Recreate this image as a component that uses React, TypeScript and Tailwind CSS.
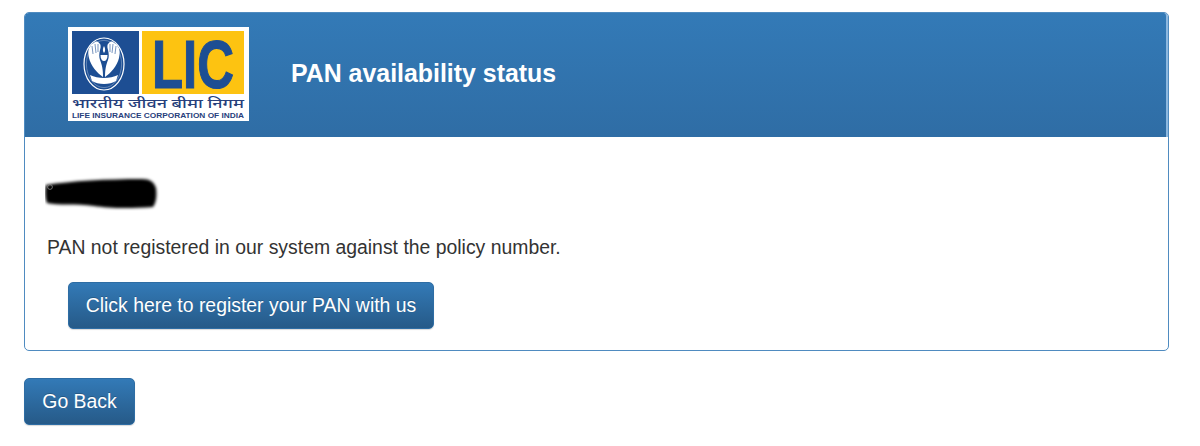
export default function App() {
  const btn =
    "block h-[47px] rounded-[5px] border border-[#2e6da4] bg-gradient-to-b from-[#337ab7] to-[#265a88] text-[19.4px] leading-none text-white [text-shadow:0_-1px_0_rgba(0,0,0,0.2)] shadow-[0_1px_1px_rgba(0,0,0,0.15)]";
  return (
    <div className="min-h-[446px] bg-white pl-[24px] pr-[31px] pt-[12px] font-['Liberation_Sans',Arial,sans-serif] text-[#333333]">
      <section className="h-[339px] rounded-[5px] border border-[#4f8bc0]">
        <header className="flex h-[124px] items-center gap-[42px] rounded-t-[4px] border-r-2 border-r-[#8db8df] bg-gradient-to-b from-[#337ab7] to-[#2f6da5] pb-[2px] pl-[43px]">
          <svg width="181" height="94" viewBox="0 0 181 94" className="shrink-0" role="img" aria-label="LIC logo">
            <rect width="181" height="94" fill="#ffffff" />
            <rect x="4" y="4" width="67" height="63" fill="#1d4e93" />
            <rect x="74" y="4" width="102" height="63" fill="#fdc311" />
            <ellipse cx="36" cy="37" rx="20" ry="26" fill="none" stroke="#ffffff" strokeWidth="1.2" />
            <ellipse cx="36" cy="37" rx="17.6" ry="23.6" fill="none" stroke="#a9bcd8" strokeWidth="0.5" />
            {/* left hand */}
            <path d="M35 50 C29 46 23 39 21 31 C20 26 20 22 22 20 C23 17 25 16 26 16 C27 14 30 14 31 16 C33 17 33 20 32 23 C31 27 31 30 32 33 C34 38 35 42 35 50 Z" fill="#ffffff" />
            {/* right hand */}
            <path d="M37 50 C43 46 49 39 51 31 C52 26 52 22 50 20 C49 17 47 16 46 16 C45 14 42 14 41 16 C39 17 39 20 40 23 C41 27 41 30 40 33 C38 38 37 42 37 50 Z" fill="#ffffff" />
            <path d="M24 19 L25 27 M27 17 L28 26 M30 17 L30 25 M48 19 L47 27 M45 17 L44 26 M42 17 L42 25" stroke="#1d4e93" strokeWidth="0.6" fill="none" />
            {/* lamp */}
            <path d="M32.5 28 L39.5 28 C39.5 32 38 34 36 34 C34 34 32.5 32 32.5 28 Z" fill="#ffffff" />
            <path d="M36 19 C37.5 22 37.5 24 36 26 C34.5 24 34.5 22 36 19 Z" fill="#ffffff" />
            {/* motto band */}
            <path d="M22 48 C30 52 42 52 50 48 L48 54 C42 58 30 58 24 54 Z" fill="#ffffff" />
            <text x="125" y="61" textAnchor="middle" fontFamily="'Liberation Sans', Arial, sans-serif" fontSize="69" fontWeight="700" fill="#1d4e93" stroke="#1d4e93" strokeWidth="1.2" textLength="82" lengthAdjust="spacingAndGlyphs">LIC</text>
            <text x="4" y="81" fontFamily="'Noto Sans Devanagari', 'Noto Serif Devanagari', 'Noto Sans', serif" fontSize="13" fontWeight="500" fill="#27407c" textLength="172" lengthAdjust="spacingAndGlyphs">भारतीय जीवन बीमा निगम</text>
            <text x="4" y="91" fontFamily="'Liberation Sans', Arial, sans-serif" fontSize="7.6" fontWeight="700" fill="#27407c" textLength="172" lengthAdjust="spacingAndGlyphs">LIFE INSURANCE CORPORATION OF INDIA</text>
          </svg>
          <h1 className="mb-[2px] text-[24.9px] font-bold leading-none text-white">PAN availability status</h1>
        </header>
        <div className="pl-[21px] pt-[38px]">
          <svg width="120" height="36" viewBox="0 0 120 36" className="-ml-[1px] block" aria-hidden="true">
            <defs>
              <filter id="smear" x="-10%" y="-30%" width="120%" height="160%">
                <feGaussianBlur stdDeviation="1.6" />
              </filter>
            </defs>
            <path d="M0 9 C25 5 60 3 96 3 C104 3 108 6 110 12 C111 20 110 27 107 31 C80 33 62 32 48 30 C30 27 12 30 1 27 C-1 22 -1 14 0 9 Z" fill="#000000" filter="url(#smear)" transform="translate(1 1)" />
            <circle cx="5" cy="12" r="2.4" fill="none" stroke="#9a9a9a" strokeWidth="0.7" />
          </svg>
          <p className="ml-[1px] mt-[23px] text-[19.4px] leading-[26px]">PAN not registered in our system against the policy number.</p>
          <button type="button" className={`${btn} ml-[22px] mt-[22px] w-[366px]`}>Click here to register your PAN with us</button>
        </div>
      </section>
      <button type="button" className={`${btn} mt-[27px] w-[111px]`}>Go Back</button>
    </div>
  );
}
